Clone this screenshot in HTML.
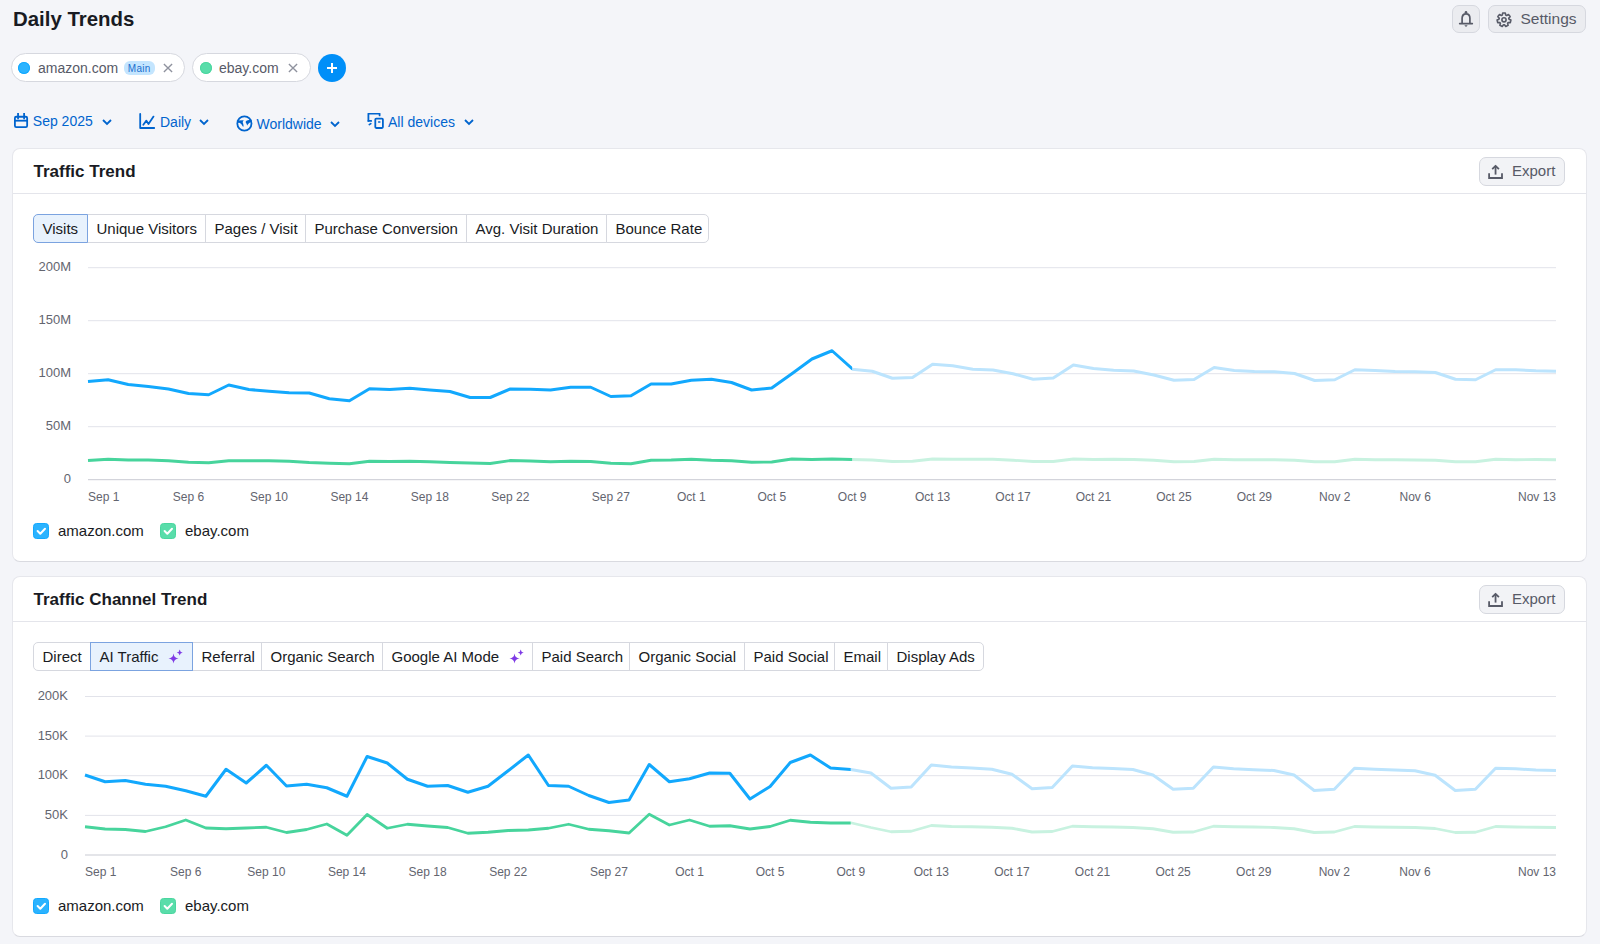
<!DOCTYPE html>
<html><head><meta charset="utf-8"><style>
*{box-sizing:border-box;margin:0;padding:0}
html,body{width:1600px;height:944px;overflow:hidden;background:#F4F5F9;font-family:"Liberation Sans", sans-serif;color:#191B23}
.a{position:absolute}
.chart{position:absolute;left:0;top:0;pointer-events:none}
.yl{position:absolute;text-align:right;font-size:13px;line-height:18px;color:#63656F}
.xl{position:absolute;font-size:12px;line-height:16px;color:#63656F;white-space:nowrap}
.card{position:absolute;left:12px;width:1575px;background:#fff;border:1px solid #E6E7EC;border-bottom-color:#D9DAE0;border-radius:8px}
.hdiv{position:absolute;left:13px;width:1573px;height:1px;background:#E4E5EB}
.ctitle{position:absolute;left:33.5px;font-size:17px;font-weight:700;line-height:20px;color:#191B23}
.btn{position:absolute;background:#EBECF0;border:1px solid #D6D8DF;border-radius:7px;font-size:15px;line-height:18px;color:#575A67}
.tab{position:absolute;height:29px;border:1px solid #D6D8DF;background:#fff;font-size:15px;line-height:27px;color:#191B23;padding-left:8.5px;white-space:nowrap}
.tab.sel{background:#E8F2FD;border-color:#7BA3E0;z-index:2}
.spark{position:absolute;top:6px}
.leg{position:absolute;width:16px;height:16px}
.leg svg{display:block}
.legt{position:absolute;font-size:15px;line-height:18px;color:#191B23}
.pill{position:absolute;top:53px;height:29px;background:#fff;border:1px solid #D6D8DF;border-radius:15px}
.pill .dot{position:absolute;top:8px;left:5.5px;width:12px;height:12px;border-radius:50%}
.pill .t{position:absolute;top:5px;left:26px;font-size:14px;line-height:18px;color:#575A67}
.pill .x{position:absolute;top:9.5px}
.main{position:absolute;left:111.5px;top:6.5px;width:31.5px;height:14.5px;background:#C4E5FE;border-radius:6px;font-size:10px;line-height:15px;color:#1B6FCF;text-align:center;letter-spacing:0.35px}
.dd{position:absolute;top:113px;height:20px;font-size:14px;line-height:18px;color:#0064CE;white-space:nowrap}
.dd svg{position:absolute}
</style></head><body>
<div class="a" style="left:13px;top:6px;font-size:20.4px;font-weight:700;line-height:26px;color:#191B23">Daily Trends</div>

<div class="btn" style="left:1452px;top:5px;width:28px;height:28px"><svg style="position:absolute;left:5px;top:5px" width="16" height="17" viewBox="0 0 16 17"><path d="M4.1 12.5 V7.3 C4.1 4.6 5.8 2.9 8 2.9 C10.2 2.9 11.9 4.6 11.9 7.3 V12.5" fill="none" stroke="#575A67" stroke-width="1.7"/><path d="M1.7 12.6 H14.3" stroke="#575A67" stroke-width="1.7" stroke-linecap="round"/><circle cx="8" cy="1.3" r="1.3" fill="#575A67"/><path d="M6.3 14.3 H9.7 L8 16.1 Z" fill="#575A67"/></svg></div>
<div class="btn" style="left:1488px;top:5px;width:98px;height:28px"><svg style="position:absolute;left:7px;top:5px" width="16" height="17" viewBox="0 0 16 17"><path d="M6.29 3.30 L6.68 1.23 L9.32 1.23 L9.71 3.30 L10.61 3.73 L12.47 2.75 L14.12 4.81 L12.74 6.41 L12.96 7.38 L14.90 8.22 L14.31 10.79 L12.20 10.71 L11.58 11.49 L12.12 13.53 L9.75 14.67 L8.50 12.98 L7.50 12.98 L6.25 14.67 L3.88 13.53 L4.42 11.49 L3.80 10.71 L1.69 10.79 L1.10 8.22 L3.04 7.38 L3.26 6.41 L1.88 4.81 L3.53 2.75 L5.39 3.73 Z" transform="translate(0 0.8)" fill="none" stroke="#575A67" stroke-width="1.6" stroke-linejoin="round"/><circle cx="8" cy="8.8" r="2.1" fill="none" stroke="#575A67" stroke-width="1.6"/></svg><span style="position:absolute;left:31.5px;top:4px;font-size:15.5px">Settings</span></div>

<div class="pill" style="left:11px;width:173.5px"><div class="dot" style="background:#2BB3FF;box-shadow:inset 0 0 0 1px #13A9FF"></div><div class="t">amazon.com</div><div class="main">Main</div><svg class="x" style="left:151px;top:9px" width="10" height="10" viewBox="0 0 10 10"><path d="M0.9 0.9 L9.1 9.1 M9.1 0.9 L0.9 9.1" stroke="#8F929E" stroke-width="1.35"/></svg></div>
<div class="pill" style="left:192px;width:118.5px"><div class="dot" style="left:6.5px;background:#59DDAA;box-shadow:inset 0 0 0 1px #4CD7A0"></div><div class="t">ebay.com</div><svg class="x" style="left:94.5px;top:9px" width="10" height="10" viewBox="0 0 10 10"><path d="M0.9 0.9 L9.1 9.1 M9.1 0.9 L0.9 9.1" stroke="#8F929E" stroke-width="1.35"/></svg></div>
<div class="a" style="left:318px;top:54px;width:28px;height:28px;border-radius:50%;background:#008FF8"><svg style="position:absolute;left:9px;top:9px" width="10" height="10" viewBox="0 0 10 10"><path d="M5 0 V10 M0 5 H10" stroke="#fff" stroke-width="2"/></svg></div>

<div class="dd" style="left:14px"><svg style="left:0;top:0" width="15" height="16" viewBox="0 0 15 16"><rect x="0.9" y="3.75" width="12.25" height="10.35" rx="1.3" fill="none" stroke="#0064CE" stroke-width="1.8"/><path d="M0.9 7.7 H13.1" stroke="#0064CE" stroke-width="1.8"/><path d="M4.05 0 V5.6 M10.1 0 V5.6" stroke="#0064CE" stroke-width="1.8" stroke-linecap="round"/></svg><span style="position:absolute;left:18.8px;top:-1px">Sep 2025</span><svg style="left:88px;top:5.7px" width="10" height="7" viewBox="0 0 10 7"><path d="M1 1 L5 5 L9 1" fill="none" stroke="#0064CE" stroke-width="1.8"/></svg></div>
<div class="dd" style="left:139px"><svg style="left:0;top:0" width="17" height="17" viewBox="0 0 17 17"><path d="M1.2 0.9 V15 H15.2" fill="none" stroke="#0064CE" stroke-width="1.8" stroke-linecap="round" stroke-linejoin="round"/><path d="M4.3 11.8 L7.4 7.6 L9.5 11 L14.5 3.6" fill="none" stroke="#0064CE" stroke-width="1.8" stroke-linecap="round" stroke-linejoin="round"/></svg><span style="position:absolute;left:21px;top:-0.5px">Daily</span><svg style="left:60px;top:5.7px" width="10" height="7" viewBox="0 0 10 7"><path d="M1 1 L5 5 L9 1" fill="none" stroke="#0064CE" stroke-width="1.8"/></svg></div>
<div class="dd" style="left:236px;top:115px"><svg style="left:0;top:0" width="17" height="17" viewBox="0 0 17 17"><circle cx="8.4" cy="8.5" r="7.1" fill="none" stroke="#0064CE" stroke-width="1.8"/><path d="M0.8 5.5 L7.8 5.2 C6.8 6 6.4 7 7.1 8.6 C7.6 9.8 7.7 11 7.3 12.1 C6.4 11 5.8 9.6 4.6 8.6 C3.4 7.7 2 7.8 1 7.8 Z" fill="#0064CE"/><path d="M9.5 6.9 C10 6 10.8 5.4 11.8 5.2 L15.3 4.6 L16 6.6 C15 7.2 14 7.4 13.2 8 C12.2 8.7 11.6 9.6 11.2 10.4 C10.8 9.4 10.6 8.4 9.5 6.9 Z" fill="#0064CE"/></svg><span style="position:absolute;left:20.5px;top:-0.5px">Worldwide</span><svg style="left:94px;top:5.5px" width="10" height="7" viewBox="0 0 10 7"><path d="M1 1 L5 5 L9 1" fill="none" stroke="#0064CE" stroke-width="1.8"/></svg></div>
<div class="dd" style="left:367px"><svg style="left:0;top:0" width="17" height="17" viewBox="0 0 17 17"><path d="M1.4 7.9 V0.7 H12.6 V2.4" fill="none" stroke="#0064CE" stroke-width="1.8" stroke-linecap="round" stroke-linejoin="round"/><path d="M1.4 7.9 H4.2" stroke="#0064CE" stroke-width="1.8" stroke-linecap="round"/><path d="M2.3 11.6 L3.8 10.6" stroke="#0064CE" stroke-width="1.7" stroke-linecap="round"/><rect x="8.3" y="5.7" width="7.6" height="9.3" rx="0.9" fill="none" stroke="#0064CE" stroke-width="1.8"/><path d="M11.6 9 H12.9" stroke="#0064CE" stroke-width="1.4" stroke-linecap="round"/></svg><span style="position:absolute;left:21px;top:-0.5px">All devices</span><svg style="left:97px;top:5.7px" width="10" height="7" viewBox="0 0 10 7"><path d="M1 1 L5 5 L9 1" fill="none" stroke="#0064CE" stroke-width="1.8"/></svg></div>

<div class="card" style="top:148px;height:414px"></div>
<div class="hdiv" style="top:193px"></div>
<div class="ctitle" style="top:162.3px">Traffic Trend</div>
<div class="btn" style="left:1479px;top:157px;width:86px;height:29px;background:#F2F3F6"><svg style="position:absolute;left:8px;top:6px" width="16" height="16" viewBox="0 0 16 16"><path d="M1.1 9.2 V14 H14 V9.2" fill="none" stroke="#575A67" stroke-width="1.8"/><path d="M7.55 2.2 V10.6" stroke="#575A67" stroke-width="1.8"/><path d="M4.2 5.1 L7.55 1.8 L10.9 5.1" fill="none" stroke="#575A67" stroke-width="1.8" stroke-linejoin="round"/></svg><span style="position:absolute;left:32px;top:4.3px">Export</span></div>
<div class="tab sel" style="left:33px;width:55px;top:214px;border-radius:5px 0 0 5px;"><span>Visits</span></div>
<div class="tab" style="left:87px;width:119px;top:214px;"><span>Unique Visitors</span></div>
<div class="tab" style="left:205px;width:101px;top:214px;"><span>Pages / Visit</span></div>
<div class="tab" style="left:305px;width:162px;top:214px;"><span>Purchase Conversion</span></div>
<div class="tab" style="left:466px;width:141px;top:214px;"><span>Avg. Visit Duration</span></div>
<div class="tab" style="left:606px;width:103px;top:214px;border-radius:0 5px 5px 0;"><span>Bounce Rate</span></div>
<svg class="chart" width="1600" height="944" viewBox="0 0 1600 944"><defs><clipPath id="c1"><rect x="0" y="0" width="852.16" height="944"/></clipPath><clipPath id="f1"><rect x="852.16" y="0" width="1600" height="944"/></clipPath></defs><line x1="88" x2="1556" y1="267.7" y2="267.7" stroke="#E2E3EA" stroke-width="1"/><line x1="88" x2="1556" y1="320.7" y2="320.7" stroke="#E2E3EA" stroke-width="1"/><line x1="88" x2="1556" y1="373.7" y2="373.7" stroke="#E2E3EA" stroke-width="1"/><line x1="88" x2="1556" y1="426.7" y2="426.7" stroke="#E2E3EA" stroke-width="1"/><line x1="88" x2="1556" y1="479.7" y2="479.7" stroke="#C9CBD3" stroke-width="1"/><polyline clip-path="url(#f1)" fill="none" stroke="#BCE4FD" stroke-width="3" stroke-linejoin="round" points="832.05,350.75 852.16,369.25 872.27,371.25 892.38,378.25 912.49,377.50 932.60,364.25 952.71,365.75 972.82,369.25 992.93,370.00 1013.04,373.75 1033.15,379.25 1053.26,378.00 1073.37,365.00 1093.48,368.50 1113.59,370.25 1133.70,371.00 1153.81,375.00 1173.92,380.25 1194.03,379.50 1214.14,367.50 1234.25,370.50 1254.36,371.50 1274.47,371.75 1294.58,373.50 1314.68,380.50 1334.79,379.75 1354.90,369.75 1375.01,370.50 1395.12,371.50 1415.23,371.75 1435.34,372.50 1455.45,379.25 1475.56,379.75 1495.67,369.75 1515.78,369.75 1535.89,370.75 1556.00,371.25"/><polyline clip-path="url(#f1)" fill="none" stroke="#C8F2E0" stroke-width="2.8" stroke-linejoin="round" points="832.05,459.00 852.16,459.50 872.27,460.00 892.38,461.50 912.49,461.25 932.60,459.00 952.71,459.25 972.82,459.25 992.93,459.25 1013.04,460.25 1033.15,461.50 1053.26,461.50 1073.37,459.00 1093.48,459.50 1113.59,459.25 1133.70,459.50 1153.81,460.25 1173.92,461.75 1194.03,461.50 1214.14,459.25 1234.25,459.75 1254.36,459.75 1274.47,459.75 1294.58,460.25 1314.68,461.75 1334.79,461.75 1354.90,459.25 1375.01,459.75 1395.12,459.75 1415.23,460.00 1435.34,460.25 1455.45,461.75 1475.56,461.75 1495.67,459.25 1515.78,459.75 1535.89,459.50 1556.00,459.75"/><polyline clip-path="url(#c1)" fill="none" stroke="#47D49C" stroke-width="2.8" stroke-linejoin="round" points="88.00,460.50 108.11,459.25 128.22,460.00 148.33,460.00 168.44,460.75 188.55,462.25 208.66,462.75 228.77,460.75 248.88,460.75 268.99,460.75 289.10,461.25 309.21,462.50 329.32,463.25 349.42,463.75 369.53,461.25 389.64,461.50 409.75,461.25 429.86,461.75 449.97,462.50 470.08,463.00 490.19,463.50 510.30,460.50 530.41,461.00 550.52,461.75 570.63,461.25 590.74,461.50 610.85,463.25 630.96,463.75 651.07,460.25 671.18,460.00 691.29,459.25 711.40,460.25 731.51,460.75 751.62,462.25 771.73,462.00 791.84,459.00 811.95,459.50 832.05,459.00 852.16,459.50 872.27,460.00"/><polyline clip-path="url(#c1)" fill="none" stroke="#12A8FD" stroke-width="3" stroke-linejoin="round" points="88.00,381.50 108.11,379.75 128.22,384.50 148.33,386.50 168.44,389.00 188.55,393.50 208.66,394.75 228.77,385.00 248.88,389.50 268.99,391.25 289.10,392.75 309.21,393.00 329.32,398.75 349.42,400.75 369.53,388.75 389.64,389.50 409.75,388.25 429.86,390.00 449.97,391.50 470.08,397.50 490.19,397.50 510.30,389.00 530.41,389.25 550.52,390.00 570.63,387.25 590.74,387.25 610.85,396.50 630.96,395.75 651.07,384.00 671.18,384.00 691.29,380.25 711.40,379.25 731.51,382.50 751.62,390.00 771.73,388.00 791.84,373.75 811.95,359.00 832.05,350.75 852.16,368.75 872.27,371.25"/></svg>
<div class="yl" style="left:-9px;width:80px;top:258.4px">200M</div>
<div class="yl" style="left:-9px;width:80px;top:311.4px">150M</div>
<div class="yl" style="left:-9px;width:80px;top:364.4px">100M</div>
<div class="yl" style="left:-9px;width:80px;top:417.4px">50M</div>
<div class="yl" style="left:-9px;width:80px;top:470.4px">0</div>
<div class="xl" style="left:88.0px;top:489px">Sep 1</div>
<div class="xl" style="left:88.54794520547944px;width:200px;text-align:center;top:489px">Sep 6</div>
<div class="xl" style="left:168.98630136986299px;width:200px;text-align:center;top:489px">Sep 10</div>
<div class="xl" style="left:249.4246575342466px;width:200px;text-align:center;top:489px">Sep 14</div>
<div class="xl" style="left:329.86301369863014px;width:200px;text-align:center;top:489px">Sep 18</div>
<div class="xl" style="left:410.3013698630137px;width:200px;text-align:center;top:489px">Sep 22</div>
<div class="xl" style="left:510.8493150684932px;width:200px;text-align:center;top:489px">Sep 27</div>
<div class="xl" style="left:591.2876712328767px;width:200px;text-align:center;top:489px">Oct 1</div>
<div class="xl" style="left:671.7260273972603px;width:200px;text-align:center;top:489px">Oct 5</div>
<div class="xl" style="left:752.1643835616438px;width:200px;text-align:center;top:489px">Oct 9</div>
<div class="xl" style="left:832.6027397260274px;width:200px;text-align:center;top:489px">Oct 13</div>
<div class="xl" style="left:913.0410958904109px;width:200px;text-align:center;top:489px">Oct 17</div>
<div class="xl" style="left:993.4794520547946px;width:200px;text-align:center;top:489px">Oct 21</div>
<div class="xl" style="left:1073.9178082191781px;width:200px;text-align:center;top:489px">Oct 25</div>
<div class="xl" style="left:1154.3561643835617px;width:200px;text-align:center;top:489px">Oct 29</div>
<div class="xl" style="left:1234.7945205479452px;width:200px;text-align:center;top:489px">Nov 2</div>
<div class="xl" style="left:1315.2328767123288px;width:200px;text-align:center;top:489px">Nov 6</div>
<div class="xl" style="left:1356.0px;width:200px;text-align:right;top:489px">Nov 13</div>
<div class="leg" style="left:33px;top:523px"><svg width="16" height="16" viewBox="0 0 16 16"><rect x="0.5" y="0.5" width="15" height="15" rx="3" fill="#2BB3FF" stroke="#12A9FF" stroke-width="1"/><path d="M4.6 8 L7.3 10.7 L12 5.7" fill="none" stroke="#fff" stroke-width="2" stroke-linecap="round" stroke-linejoin="round"/></svg></div><div class="legt" style="left:58px;top:522px">amazon.com</div>
<div class="leg" style="left:160px;top:523px"><svg width="16" height="16" viewBox="0 0 16 16"><rect x="0.5" y="0.5" width="15" height="15" rx="3" fill="#59DDAA" stroke="#4AD69F" stroke-width="1"/><path d="M4.6 8 L7.3 10.7 L12 5.7" fill="none" stroke="#fff" stroke-width="2" stroke-linecap="round" stroke-linejoin="round"/></svg></div><div class="legt" style="left:185px;top:522px">ebay.com</div>

<div class="card" style="top:576px;height:361px"></div>
<div class="hdiv" style="top:621px"></div>
<div class="ctitle" style="top:590px">Traffic Channel Trend</div>
<div class="btn" style="left:1479px;top:585px;width:86px;height:29px;background:#F2F3F6"><svg style="position:absolute;left:8px;top:6px" width="16" height="16" viewBox="0 0 16 16"><path d="M1.1 9.2 V14 H14 V9.2" fill="none" stroke="#575A67" stroke-width="1.8"/><path d="M7.55 2.2 V10.6" stroke="#575A67" stroke-width="1.8"/><path d="M4.2 5.1 L7.55 1.8 L10.9 5.1" fill="none" stroke="#575A67" stroke-width="1.8" stroke-linejoin="round"/></svg><span style="position:absolute;left:32px;top:4.3px">Export</span></div>
<div class="tab" style="left:33px;width:58px;top:642px;border-radius:5px 0 0 5px;"><span>Direct</span></div>
<div class="tab sel" style="left:90px;width:103px;top:642px;"><span>AI Traffic</span><svg class="spark" style="left:77.2px;top:4.6px" width="17" height="16" viewBox="0 0 17 16"><path d="M5.5 5.5 Q6 10 10.5 10.5 Q6 11 5.5 15.5 Q5 11 0.5 10.5 Q5 10 5.5 5.5 Z" fill="#7F3BE5"/><path d="M11.7 1.4 Q12 4.1 14.7 4.4 Q12 4.7 11.7 7.4 Q11.4 4.7 8.7 4.4 Q11.4 4.1 11.7 1.4 Z" fill="#7F3BE5"/></svg></div>
<div class="tab" style="left:192px;width:70px;top:642px;"><span>Referral</span></div>
<div class="tab" style="left:261px;width:122px;top:642px;"><span>Organic Search</span></div>
<div class="tab" style="left:382px;width:151px;top:642px;"><span>Google AI Mode</span><svg class="spark" style="left:125.6px;top:4.6px" width="17" height="16" viewBox="0 0 17 16"><path d="M5.5 5.5 Q6 10 10.5 10.5 Q6 11 5.5 15.5 Q5 11 0.5 10.5 Q5 10 5.5 5.5 Z" fill="#7F3BE5"/><path d="M11.7 1.4 Q12 4.1 14.7 4.4 Q12 4.7 11.7 7.4 Q11.4 4.7 8.7 4.4 Q11.4 4.1 11.7 1.4 Z" fill="#7F3BE5"/></svg></div>
<div class="tab" style="left:532px;width:98px;top:642px;"><span>Paid Search</span></div>
<div class="tab" style="left:629px;width:116px;top:642px;"><span>Organic Social</span></div>
<div class="tab" style="left:744px;width:91px;top:642px;"><span>Paid Social</span></div>
<div class="tab" style="left:834px;width:54px;top:642px;"><span>Email</span></div>
<div class="tab" style="left:887px;width:97px;top:642px;border-radius:0 5px 5px 0;"><span>Display Ads</span></div>
<svg class="chart" width="1600" height="944" viewBox="0 0 1600 944"><defs><clipPath id="c2"><rect x="0" y="0" width="850.73" height="944"/></clipPath><clipPath id="f2"><rect x="850.73" y="0" width="1600" height="944"/></clipPath></defs><line x1="85" x2="1556" y1="696.5" y2="696.5" stroke="#E2E3EA" stroke-width="1"/><line x1="85" x2="1556" y1="736.1" y2="736.1" stroke="#E2E3EA" stroke-width="1"/><line x1="85" x2="1556" y1="775.7" y2="775.7" stroke="#E2E3EA" stroke-width="1"/><line x1="85" x2="1556" y1="815.4" y2="815.4" stroke="#E2E3EA" stroke-width="1"/><line x1="85" x2="1556" y1="855" y2="855" stroke="#C9CBD3" stroke-width="1"/><polyline clip-path="url(#f2)" fill="none" stroke="#BCE4FD" stroke-width="3" stroke-linejoin="round" points="830.58,768.00 850.73,769.50 870.88,773.00 891.03,788.25 911.18,787.00 931.33,765.00 951.48,767.00 971.63,768.00 991.78,769.25 1011.93,774.25 1032.08,788.75 1052.23,787.50 1072.38,766.00 1092.53,767.75 1112.68,768.50 1132.84,769.50 1152.99,775.00 1173.14,789.25 1193.29,788.25 1213.44,767.00 1233.59,768.75 1253.74,769.75 1273.89,770.50 1294.04,775.00 1314.19,790.50 1334.34,789.25 1354.49,768.25 1374.64,769.25 1394.79,770.00 1414.95,770.75 1435.10,775.25 1455.25,790.50 1475.40,789.25 1495.55,768.25 1515.70,768.75 1535.85,770.00 1556.00,770.50"/><polyline clip-path="url(#f2)" fill="none" stroke="#C8F2E0" stroke-width="2.8" stroke-linejoin="round" points="830.58,823.00 850.73,822.75 870.88,827.50 891.03,831.75 911.18,831.25 931.33,825.50 951.48,826.50 971.63,826.75 991.78,827.25 1011.93,828.25 1032.08,832.00 1052.23,831.50 1072.38,826.25 1092.53,826.75 1112.68,827.00 1132.84,827.50 1152.99,828.75 1173.14,832.25 1193.29,832.00 1213.44,826.25 1233.59,826.75 1253.74,827.00 1273.89,827.50 1294.04,828.75 1314.19,832.50 1334.34,832.00 1354.49,826.50 1374.64,827.00 1394.79,827.25 1414.95,827.50 1435.10,828.50 1455.25,832.50 1475.40,832.25 1495.55,826.50 1515.70,827.00 1535.85,827.25 1556.00,827.50"/><polyline clip-path="url(#c2)" fill="none" stroke="#47D49C" stroke-width="2.8" stroke-linejoin="round" points="85.00,826.75 105.15,829.00 125.30,829.50 145.45,831.50 165.60,826.75 185.75,820.00 205.90,828.00 226.05,828.75 246.21,828.00 266.36,827.25 286.51,832.50 306.66,829.50 326.81,824.00 346.96,835.25 367.11,814.50 387.26,828.25 407.41,824.25 427.56,826.00 447.71,827.50 467.86,833.25 488.01,832.25 508.16,830.50 528.32,830.00 548.47,828.25 568.62,824.25 588.77,829.25 608.92,830.75 629.07,833.00 649.22,814.25 669.37,825.00 689.52,820.00 709.67,826.25 729.82,825.75 749.97,829.00 770.12,826.50 790.27,820.25 810.42,822.25 830.58,823.00 850.73,823.00 870.88,827.50"/><polyline clip-path="url(#c2)" fill="none" stroke="#12A8FD" stroke-width="3" stroke-linejoin="round" points="85.00,775.00 105.15,781.75 125.30,780.50 145.45,784.25 165.60,786.25 185.75,790.75 205.90,796.25 226.05,769.25 246.21,783.00 266.36,765.25 286.51,786.00 306.66,784.25 326.81,787.75 346.96,796.25 367.11,756.50 387.26,763.00 407.41,779.25 427.56,786.25 447.71,785.50 467.86,792.25 488.01,786.25 508.16,770.75 528.32,755.00 548.47,785.50 568.62,786.25 588.77,795.50 608.92,802.50 629.07,800.00 649.22,764.50 669.37,781.75 689.52,778.75 709.67,773.00 729.82,773.25 749.97,799.00 770.12,786.50 790.27,762.50 810.42,755.00 830.58,768.00 850.73,769.50 870.88,773.00"/></svg>
<div class="yl" style="left:-12px;width:80px;top:687.2px">200K</div>
<div class="yl" style="left:-12px;width:80px;top:726.8000000000001px">150K</div>
<div class="yl" style="left:-12px;width:80px;top:766.4000000000001px">100K</div>
<div class="yl" style="left:-12px;width:80px;top:806.1px">50K</div>
<div class="yl" style="left:-12px;width:80px;top:845.7px">0</div>
<div class="xl" style="left:85.0px;top:864px">Sep 1</div>
<div class="xl" style="left:85.75342465753425px;width:200px;text-align:center;top:864px">Sep 6</div>
<div class="xl" style="left:166.35616438356163px;width:200px;text-align:center;top:864px">Sep 10</div>
<div class="xl" style="left:246.958904109589px;width:200px;text-align:center;top:864px">Sep 14</div>
<div class="xl" style="left:327.56164383561645px;width:200px;text-align:center;top:864px">Sep 18</div>
<div class="xl" style="left:408.16438356164383px;width:200px;text-align:center;top:864px">Sep 22</div>
<div class="xl" style="left:508.917808219178px;width:200px;text-align:center;top:864px">Sep 27</div>
<div class="xl" style="left:589.5205479452054px;width:200px;text-align:center;top:864px">Oct 1</div>
<div class="xl" style="left:670.1232876712329px;width:200px;text-align:center;top:864px">Oct 5</div>
<div class="xl" style="left:750.7260273972603px;width:200px;text-align:center;top:864px">Oct 9</div>
<div class="xl" style="left:831.3287671232877px;width:200px;text-align:center;top:864px">Oct 13</div>
<div class="xl" style="left:911.931506849315px;width:200px;text-align:center;top:864px">Oct 17</div>
<div class="xl" style="left:992.5342465753424px;width:200px;text-align:center;top:864px">Oct 21</div>
<div class="xl" style="left:1073.13698630137px;width:200px;text-align:center;top:864px">Oct 25</div>
<div class="xl" style="left:1153.7397260273972px;width:200px;text-align:center;top:864px">Oct 29</div>
<div class="xl" style="left:1234.3424657534247px;width:200px;text-align:center;top:864px">Nov 2</div>
<div class="xl" style="left:1314.945205479452px;width:200px;text-align:center;top:864px">Nov 6</div>
<div class="xl" style="left:1356.0px;width:200px;text-align:right;top:864px">Nov 13</div>
<div class="leg" style="left:33px;top:897.5px"><svg width="16" height="16" viewBox="0 0 16 16"><rect x="0.5" y="0.5" width="15" height="15" rx="3" fill="#2BB3FF" stroke="#12A9FF" stroke-width="1"/><path d="M4.6 8 L7.3 10.7 L12 5.7" fill="none" stroke="#fff" stroke-width="2" stroke-linecap="round" stroke-linejoin="round"/></svg></div><div class="legt" style="left:58px;top:896.5px">amazon.com</div>
<div class="leg" style="left:160px;top:897.5px"><svg width="16" height="16" viewBox="0 0 16 16"><rect x="0.5" y="0.5" width="15" height="15" rx="3" fill="#59DDAA" stroke="#4AD69F" stroke-width="1"/><path d="M4.6 8 L7.3 10.7 L12 5.7" fill="none" stroke="#fff" stroke-width="2" stroke-linecap="round" stroke-linejoin="round"/></svg></div><div class="legt" style="left:185px;top:896.5px">ebay.com</div>
</body></html>
